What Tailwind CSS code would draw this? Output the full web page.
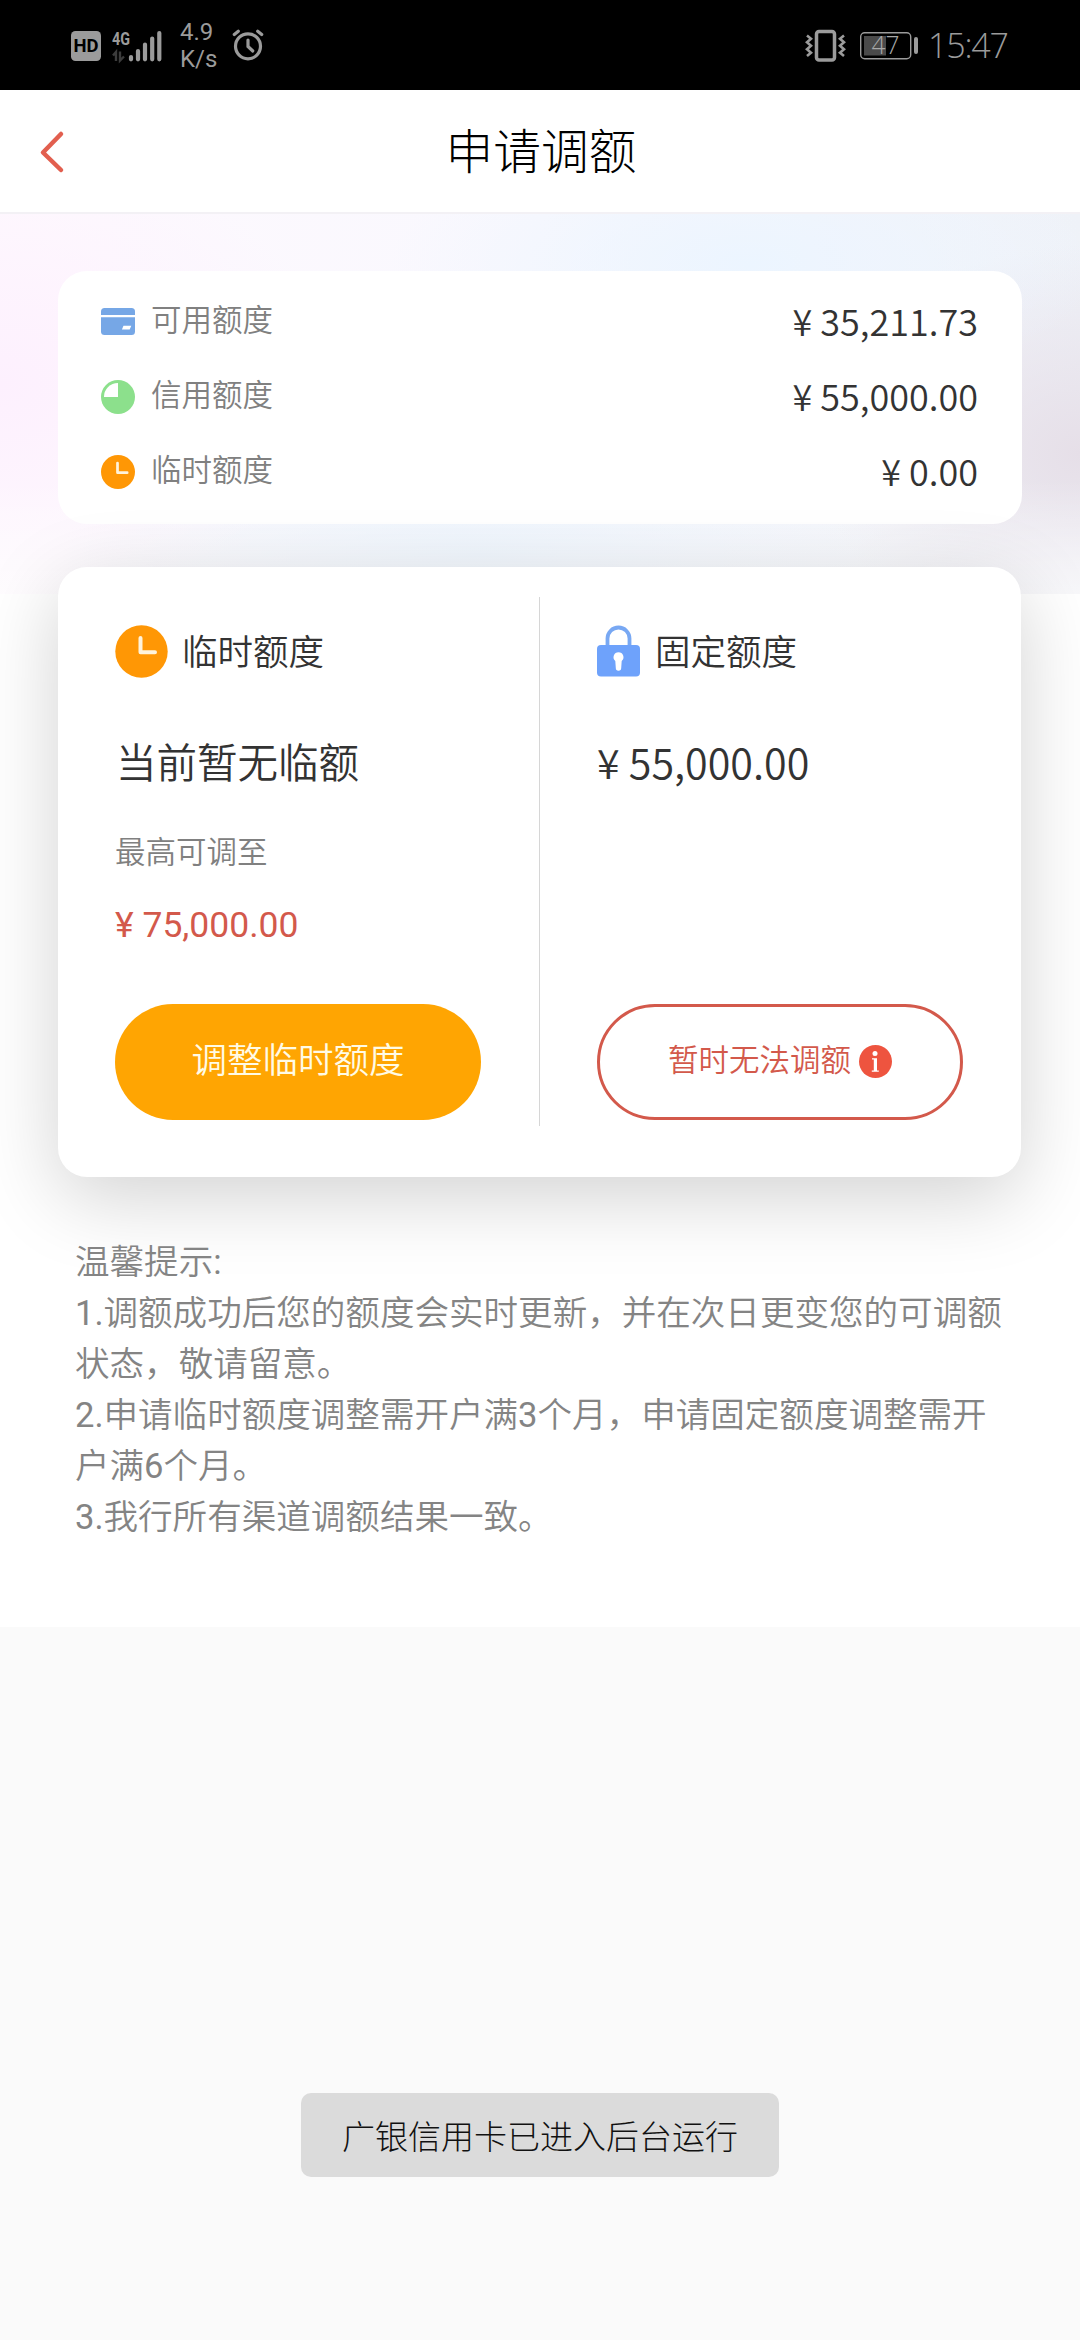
<!DOCTYPE html>
<html lang="zh-CN">
<head>
<meta charset="utf-8">
<title>申请调额</title>
<script src="https://cdn.jsdelivr.net/npm/@tailwindcss/browser@4"></script>
</head>
<body class="w-[1080px] h-[2340px] overflow-hidden bg-[#fafafa] font-['Noto_Sans_CJK_SC',sans-serif] text-[#333]">

<!-- Status bar -->
<div class="h-[90px] bg-black flex items-center justify-between pl-[71px] pr-[71px] text-[#9b9b9b]">
  <div class="flex items-center h-full">
    <div class="w-[30px] h-[30px] mt-[2px] rounded-[4.500px] bg-[#9b9b9b] text-black font-[Roboto] font-bold text-[18.500px] leading-[30px] text-center">HD</div>
    <svg class="w-[51px] h-[34px] ml-[10px] mt-[1px] overflow-visible" viewBox="111 28 51 34"><text x="112" y="44" font-family="Roboto" font-weight="700" font-size="19" textLength="18" lengthAdjust="spacingAndGlyphs" fill="#9b9b9b">4G</text>
      <path d="M113 54.5l3-3.5v9M120 50.500v9l4-4" stroke="#3c3c3c" stroke-width="2.400" fill="none"/>
      <path d="M131 56v2.300M138 50v8.300M145 43.500v14.800M152.200 37.500v20.800M159.300 32v26.300" stroke="#9b9b9b" stroke-width="4.200" stroke-linecap="round"/></svg>
    <div class="ml-[18px] w-[40px] font-[Roboto] text-[24px] leading-[27.500px] mt-[2px]">4.9<br>K/s</div>
    <svg class="w-[32px] h-[32px] ml-[12px]" viewBox="232 29 32 32" fill="none" stroke="#9b9b9b" stroke-width="3.200" stroke-linecap="round"><circle cx="248" cy="46.300" r="12.500"/><path d="M248 40v6.500l4.800 4.500"/><path d="M234.300 34.500l4-3.300M261.700 34.500l-4-3.300"/></svg>
  </div>
  <div class="flex items-center h-full">
    <svg class="w-[41px] h-[34px] mt-[1px]" viewBox="804 28.500 41 34" fill="none" stroke="#9b9b9b"><rect x="815.500" y="31" width="18" height="28.500" rx="2.500" stroke-width="3.500"/><path d="M806 35l4 3.300-4 3.500 4 3.500-4 3.500 4 3.500-4 3.300M843 35l-4 3.300 4 3.500-4 3.500 4 3.500-4 3.500 4 3.300" stroke-width="2.600"/></svg>
    <svg class="w-[60px] h-[37px] ml-[13px] mt-[1px] overflow-visible" viewBox="858 27 60 37"><rect x="859.700" y="32.700" width="50" height="26" rx="4" fill="none" stroke="#9b9b9b" stroke-width="1.400"/><rect x="863" y="36" width="22" height="19.500" fill="#4a4a4a"/><rect x="913" y="37" width="4" height="17" rx="2" fill="#9b9b9b"/><text x="870.500" y="54" font-family="Open Sans" font-weight="300" font-size="25" textLength="28" lengthAdjust="spacingAndGlyphs" fill="#a8a8a8">47</text></svg>
    <div class="ml-[9px] w-[81px] font-['Open_Sans'] font-light text-[34px] leading-[40px] tracking-[-1.200px] whitespace-nowrap">15:47</div>
  </div>
</div>

<!-- Title bar -->
<div class="h-[122px] bg-white grid grid-cols-[1fr_auto_1fr] items-center pl-[38px] pr-[36px]">
  <svg class="w-[28px] h-[44px] mt-[1px]" viewBox="0 0 28 44" fill="none" stroke="#e25f4f" stroke-width="4.500" stroke-linecap="round" stroke-linejoin="round"><path d="M23 4L5 22.500L23 40"/></svg>
  <h1 class="text-[47.700px] leading-[60px] font-light text-black -mt-[5px]">申请调额</h1>
</div>

<main class="h-[1415px] bg-white">
  <!-- Tinted band behind the summary card -->
  <div class="h-[382px] border-t-2 border-[#f3f1f5] px-[58px] pt-[57px] bg-[linear-gradient(180deg,#ffffff00_70%,#ffffffa0_100%),radial-gradient(ellipse_340px_230px_at_0px_170px,#fdf0fe_0%,#fdf0fe00_100%),radial-gradient(ellipse_360px_130px_at_750px_50px,#ecf5ff_0%,#ecf5ff00_100%),radial-gradient(ellipse_260px_210px_at_1080px_240px,#e6dfe8_0%,#e6dfe800_100%),radial-gradient(ellipse_420px_120px_at_480px_340px,#e8f2fd_0%,#e8f2fd00_100%),linear-gradient(90deg,#fef9fe_0%,#f9f8fe_50%,#eff2f8_100%)]">
    <section class="h-[253px] rounded-[29px] bg-white pt-[12px] pl-[43px] pr-[44px]">
      <div class="h-[75px] flex items-center">
        <svg class="w-[34px] h-[34px] mt-[2px]" viewBox="0 0 34 34"><rect y="3" width="34" height="27" rx="3.500" fill="#76a7e6"/><path d="M0 11.200h34" stroke="#fff" stroke-width="2.200"/><path d="M22.500 20.700h7.800l-1.600 3.800h-7.800z" fill="#fff"/></svg>
        <span class="ml-[16px] text-[30.500px] leading-[44px] font-[350] text-[#808080] -mt-[6px]">可用额度</span>
        <span class="ml-auto text-[36px] leading-[50px] font-[350] -mt-[1px]">¥ 35,211.73</span>
      </div>
      <div class="h-[75px] flex items-center">
        <svg class="w-[34px] h-[34px] mt-[2px]" viewBox="0 0 34 34"><circle cx="17" cy="17" r="17" fill="#8ce08c"/><path d="M17 3v14H3A14 14 0 0 1 17 3z" fill="#fff"/></svg>
        <span class="ml-[16px] text-[30.500px] leading-[44px] font-[350] text-[#808080] -mt-[6px]">信用额度</span>
        <span class="ml-auto text-[36px] leading-[50px] font-[350] -mt-[1px]">¥ 55,000.00</span>
      </div>
      <div class="h-[75px] flex items-center">
        <svg class="w-[34px] h-[34px] mt-[2px]" viewBox="0 0 34 34"><circle cx="17" cy="17" r="17" fill="#ff9705"/><path d="M16.500 8v9.700h9.700" fill="none" stroke="#fff3dc" stroke-width="2.700" stroke-linecap="round" stroke-linejoin="round"/></svg>
        <span class="ml-[16px] text-[30.500px] leading-[44px] font-[350] text-[#808080] -mt-[6px]">临时额度</span>
        <span class="ml-auto text-[36px] leading-[50px] font-[350] -mt-[1px]">¥ 0.00</span>
      </div>
    </section>
  </div>

  <!-- Adjustable limits -->
  <section class="relative mx-[58px] w-[963px] h-[610px] -mt-[27px] rounded-[29px] bg-white shadow-[0_20px_80px_rgba(0,0,0,0.18)] flex pt-[30px] font-[350]">
    <div class="w-[481px] pl-[57px] flex flex-col">
      <div class="h-[108px] flex items-center">
        <svg class="w-[53px] h-[53px]" viewBox="0 0 53 53"><circle cx="26.500" cy="26.500" r="26.200" fill="#ff9705"/><path d="M25.500 13v14.300h14.500" fill="none" stroke="#fff3dc" stroke-width="4" stroke-linecap="round" stroke-linejoin="round"/></svg>
        <span class="ml-[14px] text-[35.500px] leading-[50px] -mt-[2px]">临时额度</span>
      </div>
      <div class="h-[114px] flex items-center pl-px pb-[2px] text-[40.500px] leading-[58px]">当前暂无临额</div>
      <div class="h-[62px] flex items-center text-[30.500px] leading-[44px] text-[#808080]">最高可调至</div>
      <div class="h-[82px] flex items-center pt-[5px] text-[35.500px] leading-[50px] font-[Roboto] font-normal text-[#d3594b]">¥ 75,000.00</div>
      <div class="mt-[41px] w-[366px] h-[116px] rounded-full bg-[#ffa502] flex items-center justify-center pb-[8px] text-[35.500px] leading-[50px] text-[#fffbe6]">调整临时额度</div>
    </div>
    <div class="w-px h-[529px] bg-[#d6d6d6]"></div>
    <div class="w-[481px] pl-[57px] flex flex-col">
      <div class="h-[108px] flex items-center">
        <svg class="w-[43px] h-[52px]" viewBox="0 0 43 52"><path d="M10.500 20v-6.500a11 11 0 0 1 22 0V20" fill="none" stroke="#78a8f3" stroke-width="3.800"/><rect y="20" width="43" height="31.500" rx="4" fill="#6ea2fb"/><path d="M21.500 27.300a5 5 0 0 1 3.200 8.800l-.5 7a2.700 2.700 0 0 1-5.400 0l-.5-7a5 5 0 0 1 3.200-8.800z" fill="#fff"/></svg>
        <span class="ml-[15px] text-[35.500px] leading-[50px] -mt-[2px]">固定额度</span>
      </div>
      <div class="h-[114px] flex items-center pb-[2px] text-[41.200px] leading-[58px]">¥ 55,000.00</div>
      <div class="mt-[185px] w-[366px] h-[116px] rounded-full border-3 border-[#d3594b] flex items-center justify-center text-[30.500px] leading-[44px] text-[#d3594b]">
        <span class="-mt-[8px]">暂时无法调额</span>
        <svg class="ml-[8px] -mt-[2px] w-[33px] h-[33px]" viewBox="0 0 33 33"><circle cx="16.500" cy="16.500" r="16.500" fill="#ee543f"/><circle cx="16" cy="8.500" r="2.500" fill="#fff"/><path d="M13 13.200h5v12.300h1.800v1.300h-7V25.500h2v-11h-1.800z" fill="#fff"/></svg>
      </div>
    </div>
  </section>

  <!-- Notes -->
  <div class="relative pt-[60px] pl-[75px] text-[34.560px] leading-[51px] text-[#848484] whitespace-nowrap font-[Roboto,'Noto_Sans_CJK_SC',sans-serif] font-[350]">
    <p>温馨提示<span class="font-normal">:</span></p>
    <p><span class="font-normal">1.</span>调额成功后您的额度会实时更新，并在次日更变您的可调额<br>状态，敬请留意。</p>
    <p><span class="font-normal">2.</span>申请临时额度调整需开户满<span class="font-normal">3</span>个月，申请固定额度调整需开<br>户满<span class="font-normal">6</span>个月。</p>
    <p><span class="font-normal">3.</span>我行所有渠道调额结果一致。</p>
  </div>
</main>

<!-- Toast -->
<div class="mt-[466px] mx-auto w-[478px] h-[84px] rounded-[10px] bg-[#dbdbdb] flex items-center justify-center text-[33px] leading-[48px] font-light text-[#111]">广银信用卡已进入后台运行</div>

</body>
</html>
